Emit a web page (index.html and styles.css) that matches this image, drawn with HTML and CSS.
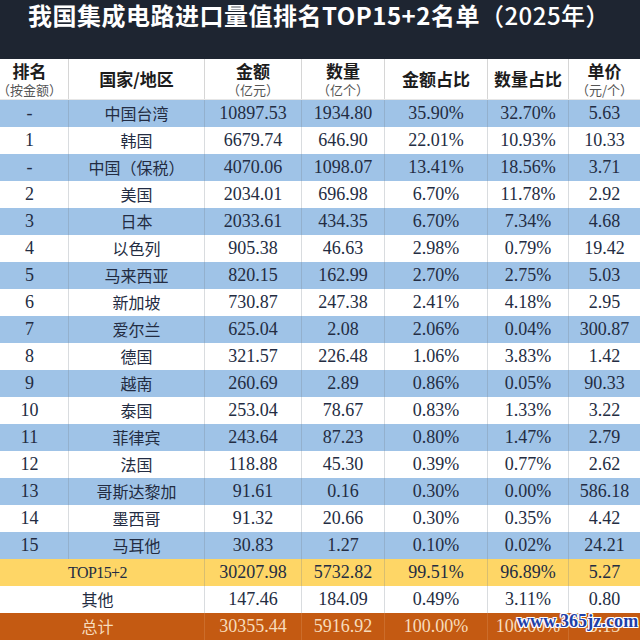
FILE: index.html
```html
<!DOCTYPE html>
<html lang="zh-CN">
<head>
<meta charset="utf-8">
<title>我国集成电路进口量值排名TOP15+2名单（2025年）</title>
<link rel="stylesheet" href="styles.css">
</head>
<body>
<div class="page">
  <div class="titlebar"><span class="t-main">我国集成电路进口量值排名TOP15+2名单</span><span class="t-year">（2025年）</span></div>
  <div class="table">
    <div class="row head">
      <div class="cell rank"><span class="h">排名</span><span class="sub">（按金额）</span></div>
      <div class="cell"><span class="h">国家/地区</span></div>
      <div class="cell"><span class="h">金额</span><span class="sub">（亿元）</span></div>
      <div class="cell"><span class="h">数量</span><span class="sub">（亿个）</span></div>
      <div class="cell"><span class="h">金额占比</span></div>
      <div class="cell"><span class="h">数量占比</span></div>
      <div class="cell last"><span class="h">单价</span><span class="sub">（元/个）</span></div>
    </div>
    <div class="row blue"><div class="cell rank">-</div><div class="cell name">中国台湾</div><div class="cell">10897.53</div><div class="cell">1934.80</div><div class="cell">35.90%</div><div class="cell">32.70%</div><div class="cell last">5.63</div></div>
    <div class="row"><div class="cell rank">1</div><div class="cell name">韩国</div><div class="cell">6679.74</div><div class="cell">646.90</div><div class="cell">22.01%</div><div class="cell">10.93%</div><div class="cell last">10.33</div></div>
    <div class="row blue"><div class="cell rank">-</div><div class="cell name">中国（保税）</div><div class="cell">4070.06</div><div class="cell">1098.07</div><div class="cell">13.41%</div><div class="cell">18.56%</div><div class="cell last">3.71</div></div>
    <div class="row"><div class="cell rank">2</div><div class="cell name">美国</div><div class="cell">2034.01</div><div class="cell">696.98</div><div class="cell">6.70%</div><div class="cell">11.78%</div><div class="cell last">2.92</div></div>
    <div class="row blue"><div class="cell rank">3</div><div class="cell name">日本</div><div class="cell">2033.61</div><div class="cell">434.35</div><div class="cell">6.70%</div><div class="cell">7.34%</div><div class="cell last">4.68</div></div>
    <div class="row"><div class="cell rank">4</div><div class="cell name">以色列</div><div class="cell">905.38</div><div class="cell">46.63</div><div class="cell">2.98%</div><div class="cell">0.79%</div><div class="cell last">19.42</div></div>
    <div class="row blue"><div class="cell rank">5</div><div class="cell name">马来西亚</div><div class="cell">820.15</div><div class="cell">162.99</div><div class="cell">2.70%</div><div class="cell">2.75%</div><div class="cell last">5.03</div></div>
    <div class="row"><div class="cell rank">6</div><div class="cell name">新加坡</div><div class="cell">730.87</div><div class="cell">247.38</div><div class="cell">2.41%</div><div class="cell">4.18%</div><div class="cell last">2.95</div></div>
    <div class="row blue"><div class="cell rank">7</div><div class="cell name">爱尔兰</div><div class="cell">625.04</div><div class="cell">2.08</div><div class="cell">2.06%</div><div class="cell">0.04%</div><div class="cell last">300.87</div></div>
    <div class="row"><div class="cell rank">8</div><div class="cell name">德国</div><div class="cell">321.57</div><div class="cell">226.48</div><div class="cell">1.06%</div><div class="cell">3.83%</div><div class="cell last">1.42</div></div>
    <div class="row blue"><div class="cell rank">9</div><div class="cell name">越南</div><div class="cell">260.69</div><div class="cell">2.89</div><div class="cell">0.86%</div><div class="cell">0.05%</div><div class="cell last">90.33</div></div>
    <div class="row"><div class="cell rank">10</div><div class="cell name">泰国</div><div class="cell">253.04</div><div class="cell">78.67</div><div class="cell">0.83%</div><div class="cell">1.33%</div><div class="cell last">3.22</div></div>
    <div class="row blue"><div class="cell rank">11</div><div class="cell name">菲律宾</div><div class="cell">243.64</div><div class="cell">87.23</div><div class="cell">0.80%</div><div class="cell">1.47%</div><div class="cell last">2.79</div></div>
    <div class="row"><div class="cell rank">12</div><div class="cell name">法国</div><div class="cell">118.88</div><div class="cell">45.30</div><div class="cell">0.39%</div><div class="cell">0.77%</div><div class="cell last">2.62</div></div>
    <div class="row blue"><div class="cell rank">13</div><div class="cell name">哥斯达黎加</div><div class="cell">91.61</div><div class="cell">0.16</div><div class="cell">0.30%</div><div class="cell">0.00%</div><div class="cell last">586.18</div></div>
    <div class="row"><div class="cell rank">14</div><div class="cell name">墨西哥</div><div class="cell">91.32</div><div class="cell">20.66</div><div class="cell">0.30%</div><div class="cell">0.35%</div><div class="cell last">4.42</div></div>
    <div class="row blue"><div class="cell rank">15</div><div class="cell name">马耳他</div><div class="cell">30.83</div><div class="cell">1.27</div><div class="cell">0.10%</div><div class="cell">0.02%</div><div class="cell last">24.21</div></div>
    <div class="row yellow"><div class="cell merged latin">TOP15+2</div><div class="cell">30207.98</div><div class="cell">5732.82</div><div class="cell">99.51%</div><div class="cell">96.89%</div><div class="cell last">5.27</div></div>
    <div class="row"><div class="cell merged name">其他</div><div class="cell">147.46</div><div class="cell">184.09</div><div class="cell">0.49%</div><div class="cell">3.11%</div><div class="cell last">0.80</div></div>
    <div class="row total"><div class="cell merged name">总计</div><div class="cell">30355.44</div><div class="cell">5916.92</div><div class="cell">100.00%</div><div class="cell">100.00%</div><div class="cell last">5.13</div></div>
  </div>
  <div class="watermark">www.365jz.com</div>
</div>
</body>
</html>
```

FILE: styles.css
```css
html, body {
  margin: 0;
  padding: 0;
  background: #ffffff;
}

.page {
  position: relative;
  width: 640px;
  height: 640px;
  overflow: hidden;
}

.titlebar {
  height: 59px;
  box-sizing: border-box;
  background: #1e2531;
  color: #ffffff;
  padding-left: 28px;
  font-family: "Noto Sans CJK SC", "Noto Sans", sans-serif;
  font-size: 24px;
  line-height: 30px;
  letter-spacing: 0.5px;
  white-space: nowrap;
}

.t-main {
  font-weight: 700;
}

.t-year {
  font-weight: 500;
}

.table {
  display: flex;
  flex-direction: column;
}

.row {
  display: grid;
  grid-template-columns: 69px 136px 97px 83px 103px 81px 71px;
  height: 27px;
  background: #ffffff;
  color: #232c42;
  font-family: "Liberation Serif", "Noto Sans CJK SC", serif;
  font-size: 18px;
}

.row.blue {
  background: #9fc3e7;
}

.row.yellow {
  background: #fed666;
}

.row.total {
  background: #c45a12;
  color: #f7dcbc;
}

.cell {
  display: flex;
  align-items: center;
  justify-content: center;
  border-right: 1px solid rgba(120, 130, 140, 0.28);
  white-space: nowrap;
  line-height: 27px;
}

.cell.last {
  border-right: none;
}

.cell.rank {
  padding-right: 9px;
}

.cell.name {
  font-family: "Noto Sans CJK SC", "Noto Sans", sans-serif;
  font-size: 16px;
}

.cell.merged {
  grid-column: span 2;
  padding-right: 9px;
}

.cell.latin {
  font-size: 16px;
  letter-spacing: -0.6px;
}

.row.total .cell {
  border-right-color: rgba(255, 220, 190, 0.15);
}

.row.head {
  height: 41px;
  background: #ffffff;
  color: #1c1c1c;
  font-family: "Noto Sans CJK SC", "Noto Sans", sans-serif;
  border-bottom: 1px solid #e6e6e6;
  box-sizing: border-box;
}

.row.head .cell {
  flex-direction: column;
  line-height: 1;
  border-right-color: #d6d6d6;
}

.h {
  font-size: 17px;
  font-weight: 700;
  line-height: 20px;
}

.sub {
  font-size: 13px;
  font-weight: 400;
  color: #555555;
  line-height: 17px;
  font-feature-settings: "halt";
}

.watermark {
  position: absolute;
  left: 517px;
  top: 611px;
  font-family: "Liberation Serif", serif;
  font-weight: 700;
  font-size: 18px;
  letter-spacing: 0.1px;
  color: #1f3fa8;
  text-shadow: 1px 0 0 #fff, -1px 0 0 #fff, 0 1px 0 #fff, 0 -1px 0 #fff, 1px 1px 0 #fff, -1px -1px 0 #fff, 1px -1px 0 #fff, -1px 1px 0 #fff;
}
```
